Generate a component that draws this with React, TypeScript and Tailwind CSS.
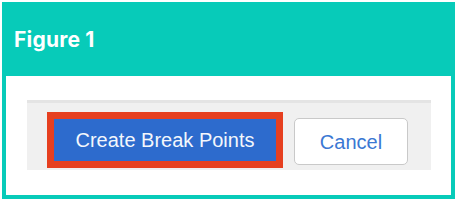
import React from "react";

export default function App() {
  return (
    <div className="w-[458px] h-[202px] bg-white pt-[2px] pl-[2px]">
      <div className="w-[453px] h-[197px] flex flex-col">
        <div className="h-[74px] bg-[#07cbb9] pl-[12px] flex items-center">
          <span
            className="text-white font-bold text-[21px] leading-none tracking-[0.01em]"
            style={{ fontFamily: 'Inter, "Open Sans", sans-serif' }}
          >
            Figure 1
          </span>
        </div>
        <div className="flex-1 border-x-[4px] border-b-[4px] border-[#07cbb9] bg-white pl-[21px] pt-[24px]">
          <div className="w-[404px] h-[70px] bg-[#f0f0f0] border-t-[3px] border-[#e4e4e4] pl-[20px] pt-[9px] flex items-start">
            <div className="w-[236px] h-[56px] border-[7px] border-[#e63f1f] bg-[#2d6bcd] flex items-center justify-center">
              <span
                className="text-[#f4f7fc] text-[20px] leading-none"
                style={{ fontFamily: '"Liberation Sans", Arial, sans-serif' }}
              >
                Create Break Points
              </span>
            </div>
            <div className="ml-[11px] mt-[6px] w-[114px] h-[47px] rounded-[5px] border border-[#c9c9c9] bg-white flex items-center justify-center">
              <span
                className="text-[#3b78d3] text-[20px] leading-none"
                style={{ fontFamily: '"Liberation Sans", Arial, sans-serif' }}
              >
                Cancel
              </span>
            </div>
          </div>
        </div>
      </div>
    </div>
  );
}
